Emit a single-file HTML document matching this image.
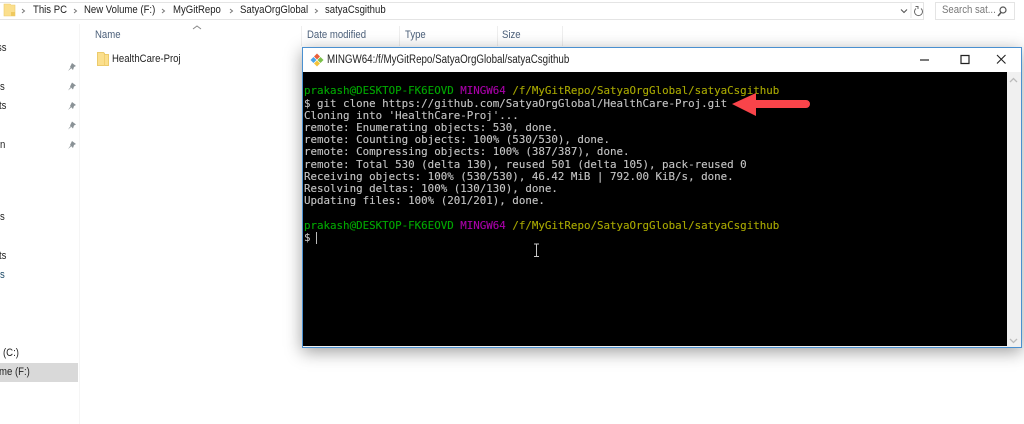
<!DOCTYPE html>
<html><head><meta charset="utf-8">
<style>
html,body{margin:0;padding:0;background:#fff;}
body{width:1024px;height:424px;overflow:hidden;position:relative;font-family:"Liberation Sans",sans-serif;color:#1f1f1f;}
.a{position:absolute;white-space:pre;line-height:14px;}
.e{font-size:11px;transform:scaleX(.87);transform-origin:0 0;}
.t{position:absolute;left:304px;font:10.82px/12px "DejaVu Sans Mono",monospace;color:#c4c4c4;white-space:pre;-webkit-text-stroke:.12px currentColor;}
.g{color:#00a800}.m{color:#a800a8}.y{color:#a8a800}
</style></head><body>
<!-- address bar -->
<div style="position:absolute;left:0;top:2px;width:923px;height:16px;border:1px solid #e4e4e4;border-left:0;"></div>
<div style="position:absolute;left:935px;top:2px;width:78px;height:16px;border:1px solid #e4e4e4;"></div>
<svg style="position:absolute;left:0;top:0" width="1024" height="24">
<path d="M4 4h6l1 1h4v11H4z" fill="#fbdf8d" stroke="#eccb6c" stroke-width=".6"/><path d="M11 12h4v4h-4z" fill="#efc95f"/>
<path d="M22 9l2.500 2-2.500 2M74 9l2.500 2-2.500 2M162 9l2.500 2-2.500 2M230 9l2.500 2-2.500 2M315 9l2.500 2-2.500 2" fill="none" stroke="#777" stroke-width="1"/>
<path d="M901 9.500l3 3 3-3" fill="none" stroke="#555" stroke-width="1.100"/>
<path d="M911 3v15" stroke="#e4e4e4"/>
<path d="M916 8.500a4 4 0 1 0 5 0M915.500 6.500h2.500v2.500" fill="none" stroke="#666" stroke-width="1"/>
<circle cx="1003" cy="10" r="3" fill="none" stroke="#555" stroke-width="1.200"/><path d="M1001 12.500l-3 3.500" stroke="#555" stroke-width="1.500"/>
</svg>
<div class="a e" style="left:33px;top:3px;">This PC</div>
<div class="a e" style="left:84px;top:3px;">New Volume (F:)</div>
<div class="a e" style="left:173px;top:3px;">MyGitRepo</div>
<div class="a e" style="left:240px;top:3px;">SatyaOrgGlobal</div>
<div class="a e" style="left:325px;top:3px;">satyaCsgithub</div>
<div class="a e" style="left:942px;top:3px;color:#777;">Search sat...</div>
<!-- column headers -->
<div style="position:absolute;left:79px;top:24px;width:1px;height:400px;background:#f5f5f5;"></div>
<div style="position:absolute;left:301px;top:26px;width:1px;height:20px;background:#eee;"></div>
<div style="position:absolute;left:399px;top:26px;width:1px;height:20px;background:#eee;"></div>
<div style="position:absolute;left:497px;top:26px;width:1px;height:20px;background:#eee;"></div>
<div style="position:absolute;left:562px;top:26px;width:1px;height:20px;background:#eee;"></div>
<svg style="position:absolute;left:192px;top:24px" width="10" height="6"><path d="M1 5l4-3 4 3" fill="none" stroke="#888"/></svg>
<div class="a e" style="left:95px;top:28px;color:#4c607a;">Name</div>
<div class="a e" style="left:307px;top:28px;color:#4c607a;">Date modified</div>
<div class="a e" style="left:405px;top:28px;color:#4c607a;">Type</div>
<div class="a e" style="left:502px;top:28px;color:#4c607a;">Size</div>
<svg style="position:absolute;left:96px;top:51px" width="14" height="15"><path d="M1.500 1.500h6l1 1v1h4v11h-11z" fill="#fbdf8d" stroke="#eccb6c"/><path d="M8 4h1v10.500H8z" fill="#f2cf6e"/></svg>
<div class="a e" style="left:112px;top:52px;">HealthCare-Proj</div>
<!-- sidebar -->
<div class="a e" style="left:-3px;top:41px;">ss</div>
<div class="a e" style="left:0;top:80px;">s</div>
<div class="a e" style="left:-1px;top:99px;">ts</div>
<div class="a e" style="left:0;top:138px;">n</div>
<div class="a e" style="left:0;top:210px;">s</div>
<div class="a e" style="left:-1px;top:249px;">ts</div>
<div class="a e" style="left:0;top:268px;color:#1d4a68">s</div>
<div class="a e" style="left:3px;top:346px;">(C:)</div>
<div style="position:absolute;left:0;top:363px;width:78px;height:19px;background:#d9d9d9;"></div>
<div class="a e" style="left:-1px;top:365px;">me (F:)</div>
<svg style="position:absolute;left:66px;top:60px" width="12" height="95" fill="#8a9296">
<g id="p"><path d="M6 3l4 3-2 1-1 3-3-3 1-2zM4.500 7.500L2 11l3-2.500z"/></g>
<use href="#p" y="19.500"/><use href="#p" y="39"/><use href="#p" y="58.500"/><use href="#p" y="78"/>
</svg>
<!-- terminal window -->
<div style="position:absolute;left:302px;top:47px;width:718px;height:299px;background:#f0f0f0;border:1px solid #4a90d0;box-shadow:0 4px 16px rgba(0,0,0,.38);"></div>
<div style="position:absolute;left:303px;top:48px;width:718px;height:24px;background:#fff;"></div>
<div style="position:absolute;left:303px;top:72px;width:704px;height:274px;background:#000;"></div>
<div style="position:absolute;left:1007px;top:72px;width:14px;height:274px;background:#f0f0f0;"></div>
<svg style="position:absolute;left:309px;top:52px" width="16" height="16">
<path d="M8 1.500L11 4.500 8 7.500 5 4.500z" fill="#e8603c"/>
<path d="M7.500 8L4.500 11 1.500 8 4.500 5z" fill="#4aa3e8"/>
<path d="M14.500 8L11.500 11 8.500 8 11.500 5z" fill="#7cc04a"/>
<path d="M8 8.500L11 11.500 8 14.500 5 11.500z" fill="#f3c23c"/>
</svg>
<div class="a" style="left:327px;top:53px;font-size:11.500px;color:#222;transform:scaleX(.85);transform-origin:0 0;">MINGW64:/f/MyGitRepo/SatyaOrgGlobal/satyaCsgithub</div>
<svg style="position:absolute;left:920px;top:50px" width="100" height="20" fill="none" stroke="#222">
<path d="M0 10h9" stroke-width="1.200"/><path d="M41 5.500h8v8h-8z" stroke-width="1.200"/><path d="M77 5l8.500 8.500M85.500 5L77 13.500" stroke-width="1.100"/>
</svg>
<svg style="position:absolute;left:1007px;top:72px" width="14" height="274" fill="none" stroke="#bbb" stroke-width="1.300">
<path d="M3 10l3.500-3.500L10 10M3 267l3.500 3.500L10 267"/>
</svg>
<div class="t" style="top:85px;"><span class="g">prakash@DESKTOP-FK6EOVD</span> <span class="m">MINGW64</span> <span class="y">/f/MyGitRepo/SatyaOrgGlobal/satyaCsgithub</span></div>
<div class="t" style="top:98px;">$ git clone https://github.com/SatyaOrgGlobal/HealthCare-Proj.git</div>
<div class="t" style="top:110px;">Cloning into 'HealthCare-Proj'...</div>
<div class="t" style="top:122px;">remote: Enumerating objects: 530, done.</div>
<div class="t" style="top:134px;">remote: Counting objects: 100% (530/530), done.</div>
<div class="t" style="top:146px;">remote: Compressing objects: 100% (387/387), done.</div>
<div class="t" style="top:159px;">remote: Total 530 (delta 130), reused 501 (delta 105), pack-reused 0</div>
<div class="t" style="top:171px;">Receiving objects: 100% (530/530), 46.42 MiB | 792.00 KiB/s, done.</div>
<div class="t" style="top:183px;">Resolving deltas: 100% (130/130), done.</div>
<div class="t" style="top:195px;">Updating files: 100% (201/201), done.</div>
<div class="t" style="top:220px;"><span class="g">prakash@DESKTOP-FK6EOVD</span> <span class="m">MINGW64</span> <span class="y">/f/MyGitRepo/SatyaOrgGlobal/satyaCsgithub</span></div>
<div class="t" style="top:232px;">$</div>
<div style="position:absolute;left:316px;top:232px;width:1px;height:12px;background:#bbb;"></div>
<svg style="position:absolute;left:532px;top:243px" width="10" height="15" fill="none" stroke="#c8c8c8" stroke-width="1">
<path d="M2 1h5M2 13.500h5M4.500 1v12.500"/>
</svg>
<svg style="position:absolute;left:730px;top:90px" width="84" height="28">
<path d="M2 14L26 3v7h50a4 4 0 0 1 0 8H26v8z" fill="#f9444a"/>
</svg>
</body></html>
